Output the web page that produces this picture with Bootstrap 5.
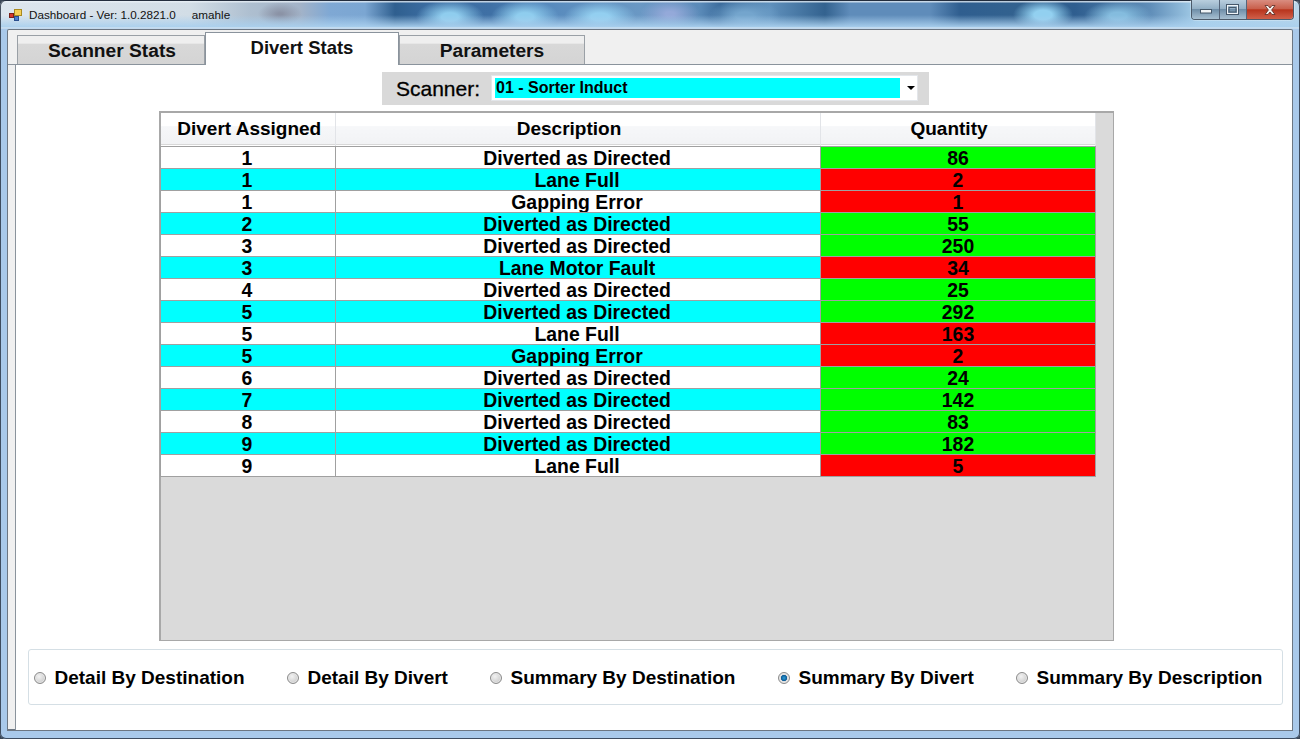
<!DOCTYPE html>
<html lang="en">
<head>
<meta charset="utf-8">
<title>Dashboard</title>
<link href="https://cdn.jsdelivr.net/npm/bootstrap@5.3.0/dist/css/bootstrap.min.css" rel="stylesheet">
<style>
html,body{height:739px;overflow:hidden;margin:0;background:#3a4656}
body{font-family:"Liberation Sans",Arial,sans-serif;color:#000}
.aero{width:1300px;height:739px;padding:0 7px 8px 7px;border-radius:6px;box-shadow:inset 0 0 0 1px rgba(35,45,60,.8);
 background:
 linear-gradient(180deg,rgba(25,35,55,.9) 0,rgba(25,35,55,.9) 1px,rgba(235,242,248,.75) 1px,rgba(235,242,248,.75) 2px,rgba(235,242,248,0) 3px),
 linear-gradient(180deg,rgba(170,208,238,0) 15px,rgba(170,208,238,.95) 27px,#dbe8f2 28px,#a9c9ea 29px),
 radial-gradient(ellipse 34px 17px at 450px 17px,#8fcdee 25%,transparent),
 radial-gradient(ellipse 34px 17px at 525px 17px,#8fcdee 25%,transparent),
 radial-gradient(ellipse 36px 16px at 600px 17px,#93cff0 25%,transparent),
 radial-gradient(ellipse 30px 16px at 670px 14px,#94a9d9 15%,transparent),
 radial-gradient(ellipse 36px 16px at 745px 16px,#74a5cd 25%,transparent),
 radial-gradient(ellipse 30px 16px at 1043px 15px,#92d0f0 30%,transparent),
 radial-gradient(ellipse 34px 15px at 1118px 16px,#84bcde 25%,transparent),
 radial-gradient(ellipse 22px 12px at 280px 14px,#8b93a6 10%,transparent),
 linear-gradient(90deg,#dde6ee 0,#d2dde6 190px,#aebfd0 250px,#a3b3c8 300px,#7fa8d4 330px,#7ba6d2 365px,#2f5f8f 395px,#3c6da2 430px,#3f70a5 490px,#5588bc 540px,#5f90c0 580px,#6a98c4 640px,#5a8ab8 700px,#3d6d9d 720px,#5f90bc 770px,#33628f 825px,#5f8cba 850px,#5f8cba 930px,#2f5e8f 960px,#33628f 1020px,#2f5e8f 1075px,#5f8db8 1150px,#a9d2ec 1200px,#b9d6ea 1300px);
}
.titlebar{height:29px;padding:0 0 0 2px;font:11.7px/1 "Liberation Sans",Arial,sans-serif;color:#111}
.ttl{margin-left:6px}
.ttl-user{margin-left:16px}
.capbtns{width:103px;height:20px;margin-right:-1px;border:1px solid #4c5a6a;border-top:0;border-radius:0 0 4px 4px;overflow:hidden;box-shadow:0 0 0 1px rgba(255,255,255,.25)}
.capbtn{height:100%;border-right:1px solid #56657a;background:linear-gradient(180deg,#b9cede 0,#94b0c6 45%,#6f8ea8 50%,#a8c0d2 100%)}
.capbtn-min{width:28px}
.capbtn-max{width:27px}
.capbtn-close{flex:1;border:0;background:linear-gradient(180deg,#d98d80 0,#c9604c 45%,#b8341d 52%,#d0604a 100%)}
.frame{height:702px;border:1px solid #6c7682;border-bottom:2px solid #6c7682;background:#f0f0f0;border-radius:2px 2px 0 0;padding-top:2px}
.tabstrip{height:33px;padding-left:9px;border-bottom:1px solid #8a939c}
.wtab{width:188px;height:29px;margin-top:3px;border:1px solid #9aa0a6;border-bottom:0;font-size:19.2px;font-weight:700;line-height:30px;text-align:center;background:linear-gradient(180deg,#efefef 0,#efefef 25%,#d8d8d8 30%,#d4d4d4 100%);color:#111}
.wtab-first{padding-left:2px}
.wtab-active{width:194px;height:33px;margin:0 0 -1px;background:#fff;border-color:#8a939c;font-size:18.5px;position:relative;z-index:1}
.wtab-last{width:186px}
.page{height:665px;margin-left:7px;padding-top:7px;background:#fff;border-left:1px solid #8a939c}
.scanbar{width:547px;height:33px;margin:0 0 0 366px;background:#d9d9d9;padding:3px 11px 4px 14px}
.scanlabel{font-size:21px;-webkit-text-stroke:.3px #000;width:95px;line-height:27px}
.scanbox{width:427px;height:26px;background:#fff;border:1px solid #e3e6ea;padding:2px 0 2px 3px}
.scanval{width:405px;background:#0ff;font-size:16px;line-height:20px;font-weight:700;padding-left:1px}
.caret-d{width:0;height:0;border-left:4px solid transparent;border-right:4px solid transparent;border-top:4px solid #000;margin-left:7px}
.gridwrap{width:955px;height:530px;margin:6px 0 0 143px;background:#dadada;border:1px solid #a8a8a8;border-top-width:2px;border-left-width:2px}
.dgrid{width:935px;border-collapse:collapse;table-layout:fixed;margin:0 0 0 -1px}
.dgrid td,.dgrid th{text-align:center;font-weight:700;border:1px solid #a0a0a0;color:#000;overflow:hidden}
.dgrid td{padding:1px 2px 0 0;font-size:19.4px;height:22px;line-height:20px}
.dgrid td.c-g,.dgrid td.c-r{padding-right:0}
.dgrid thead th{height:33px;padding:0 18px 0 0;font-size:19px;line-height:30px;background:linear-gradient(180deg,#fff 0,#fff 40%,#f6f7f9 41%,#f1f2f4 100%);border-width:0 1px 1px 0;border-right-color:#e2e4e8;box-shadow:inset 0 -1px 0 #fff,inset 0 -2px 0 #d8d8d8}
.dgrid thead th:first-child{padding:0 0 0 3px}
.c-w{background:#fff}.c-c{background:#0ff}.c-g{background:#0f0}.c-r{background:#f00}
.optgroup{width:1255px;height:56px;margin:8px 0 0 12px;border:1px solid #d5dfe5;border-radius:3px;position:relative}
.opt{position:absolute;top:16px;height:24px;font-size:19px;font-weight:700;line-height:24px;white-space:nowrap}
.rad{width:12px;height:12px;border-radius:50%;border:1px solid #8b8b8b;background:radial-gradient(circle at 40% 35%,#f2f2f2,#cfcfcf 70%);box-shadow:inset 0 0 0 1px #e8e8e8;margin-right:8.5px;flex:none}
.rad-on{background:radial-gradient(circle,#2f9ed8 0,#0b5a96 40%,#dcdcdc 48%)}
</style>
</head>
<body>
<div class="aero">
 <div class="titlebar d-flex justify-content-between">
  <div class="d-flex align-items-center">
   <svg width="14" height="14" viewBox="0 0 14 14"><rect x="0.5" y="5.5" width="4" height="4" fill="#d8392b" stroke="#7a1f18"/><rect x="5.5" y="1.5" width="7" height="6" fill="#f5cf55" stroke="#a98a20"/><rect x="5.5" y="8.5" width="4" height="4" fill="#4a80d0" stroke="#2a4f8f"/></svg>
   <span class="ttl">Dashboard - Ver: 1.0.2821.0</span><span class="ttl-user">amahle</span>
  </div>
  <div class="capbtns d-flex">
   <div class="capbtn capbtn-min d-flex align-items-center justify-content-center"><svg width="14" height="8" viewBox="0 0 14 8"><rect x="1.5" y="3.5" width="11" height="3.5" fill="#f2f5f8" stroke="#46586a"/></svg></div>
   <div class="capbtn capbtn-max d-flex align-items-center justify-content-center"><svg width="14" height="12" viewBox="0 0 14 12"><rect x="1.5" y="1.5" width="10" height="8" fill="none" stroke="#f0f4f8" stroke-width="1"/><rect x="0.5" y="0.5" width="12" height="10" fill="none" stroke="#46586a"/><rect x="3" y="3.5" width="7" height="4.5" fill="none" stroke="#46586a"/></svg></div>
   <div class="capbtn capbtn-close d-flex align-items-center justify-content-center"><svg width="16" height="12" viewBox="0 0 16 12"><path d="M3 1.5 L6 1.5 L8 4 L10 1.5 L13 1.5 L9.6 6 L13 10.5 L10 10.5 L8 8 L6 10.5 L3 10.5 L6.4 6 Z" fill="#f4f0ee" stroke="#5a2a22" stroke-width=".8"/></svg></div>
  </div>
 </div>
 <div class="frame">
  <div class="tabstrip d-flex">
   <div class="wtab wtab-first">Scanner Stats</div>
   <div class="wtab wtab-active">Divert Stats</div>
   <div class="wtab wtab-last">Parameters</div>
  </div>
  <div class="page">
   <div class="scanbar d-flex align-items-center">
    <div class="scanlabel">Scanner:</div>
    <div class="scanbox d-flex align-items-center">
     <div class="scanval">01 - Sorter Induct</div>
     <div class="caret-d"></div>
    </div>
   </div>
   <div class="gridwrap">
    <table class="dgrid">
     <colgroup><col style="width:175px"><col style="width:485px"><col style="width:275px"></colgroup>
     <thead><tr><th>Divert Assigned</th><th>Description</th><th>Quantity</th></tr></thead>
     <tbody>
      <tr class="c-w"><td>1</td><td>Diverted as Directed</td><td class="c-g">86</td></tr>
      <tr class="c-c"><td>1</td><td>Lane Full</td><td class="c-r">2</td></tr>
      <tr class="c-w"><td>1</td><td>Gapping Error</td><td class="c-r">1</td></tr>
      <tr class="c-c"><td>2</td><td>Diverted as Directed</td><td class="c-g">55</td></tr>
      <tr class="c-w"><td>3</td><td>Diverted as Directed</td><td class="c-g">250</td></tr>
      <tr class="c-c"><td>3</td><td>Lane Motor Fault</td><td class="c-r">34</td></tr>
      <tr class="c-w"><td>4</td><td>Diverted as Directed</td><td class="c-g">25</td></tr>
      <tr class="c-c"><td>5</td><td>Diverted as Directed</td><td class="c-g">292</td></tr>
      <tr class="c-w"><td>5</td><td>Lane Full</td><td class="c-r">163</td></tr>
      <tr class="c-c"><td>5</td><td>Gapping Error</td><td class="c-r">2</td></tr>
      <tr class="c-w"><td>6</td><td>Diverted as Directed</td><td class="c-g">24</td></tr>
      <tr class="c-c"><td>7</td><td>Diverted as Directed</td><td class="c-g">142</td></tr>
      <tr class="c-w"><td>8</td><td>Diverted as Directed</td><td class="c-g">83</td></tr>
      <tr class="c-c"><td>9</td><td>Diverted as Directed</td><td class="c-g">182</td></tr>
      <tr class="c-w"><td>9</td><td>Lane Full</td><td class="c-r">5</td></tr>
     </tbody>
    </table>
   </div>
   <div class="optgroup">
    <div class="opt d-flex align-items-center" style="left:5px"><span class="rad"></span>Detail By Destination</div>
    <div class="opt d-flex align-items-center" style="left:258px"><span class="rad"></span>Detail By Divert</div>
    <div class="opt d-flex align-items-center" style="left:461px"><span class="rad"></span>Summary By Destination</div>
    <div class="opt d-flex align-items-center" style="left:749px"><span class="rad rad-on"></span>Summary By Divert</div>
    <div class="opt d-flex align-items-center" style="left:987px"><span class="rad"></span>Summary By Description</div>
   </div>
  </div>
 </div>
</div>
<script src="https://cdn.jsdelivr.net/npm/bootstrap@5.3.0/dist/js/bootstrap.bundle.min.js"></script>
</body>
</html>
